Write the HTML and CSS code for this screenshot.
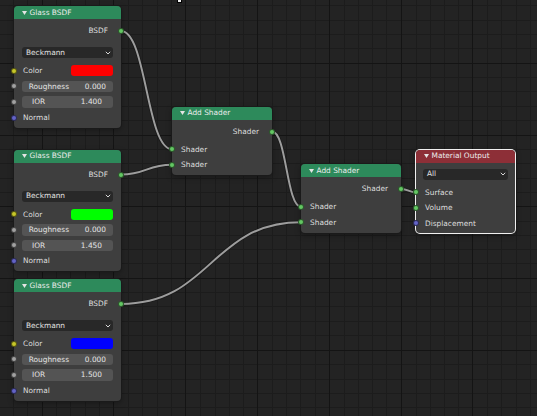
FILE: index.html
```html
<!DOCTYPE html>
<html>
<head>
<meta charset="utf-8">
<link rel="stylesheet" href="styles.css">
</head>
<body>
<div class="canvas">
  <svg class="backdrop" width="537" height="416" viewBox="0 0 537 416">
    <path class="grid-minor" d="M13.5 0V416M27.5 0V416M56.5 0V416M70.5 0V416M85.5 0V416M99.5 0V416M128.5 0V416M142.5 0V416M157.5 0V416M171.5 0V416M200.5 0V416M215.5 0V416M229.5 0V416M243.5 0V416M272.5 0V416M286.5 0V416M300.5 0V416M315.5 0V416M344.5 0V416M358.5 0V416M372.5 0V416M386.5 0V416M416.5 0V416M430.5 0V416M444.5 0V416M458.5 0V416M487.5 0V416M501.5 0V416M516.5 0V416M530.5 0V416M0 5.5H537M0 20.5H537M0 34.5H537M0 48.5H537M0 77.5H537M0 91.5H537M0 106.5H537M0 120.5H537M0 149.5H537M0 163.5H537M0 178.5H537M0 192.5H537M0 221.5H537M0 235.5H537M0 249.5H537M0 263.5H537M0 292.5H537M0 306.5H537M0 321.5H537M0 335.5H537M0 364.5H537M0 379.5H537M0 393.5H537M0 407.5H537"/>
    <path class="grid-major" d="M42.5 0V416M113.5 0V416M185.5 0V416M257.5 0V416M329.5 0V416M401.5 0V416M472.5 0V416M0 63.5H537M0 135.5H537M0 206.5H537M0 278.5H537M0 350.5H537"/>
    <g class="wire-shadow">
      <path d="M121 31C146.5 31 146.5 149.25 172 149.25"/>
      <path d="M121 174.5C146.5 174.5 146.5 164.75 172 164.75"/>
      <path d="M121 304C211 304 211 222.25 301 222.25"/>
      <path d="M272 131.5C286.5 131.5 286.5 206.75 301 206.75"/>
      <path d="M401 189C408.5 189 408.5 192.25 416 192.25"/>
    </g>
    <g class="wire">
      <path d="M121 31C146.5 31 146.5 149.25 172 149.25"/>
      <path d="M121 174.5C146.5 174.5 146.5 164.75 172 164.75"/>
      <path d="M121 304C211 304 211 222.25 301 222.25"/>
      <path d="M272 131.5C286.5 131.5 286.5 206.75 301 206.75"/>
      <path d="M401 189C408.5 189 408.5 192.25 416 192.25"/>
    </g>
  </svg>

  <div class="cursor-tip"></div>

  <!-- Glass BSDF 1 -->
  <div class="node node-glass n1">
    <div class="node-header"><svg class="tri" width="5" height="4" viewBox="0 0 5 4"><polygon points="0,0 5,0 2.5,4"/></svg><span>Glass BSDF</span></div>
    <div class="node-body">
      <div class="row row-out"><span>BSDF</span><i class="sock sock-shader"></i></div>
      <div class="dropdown"><span>Beckmann</span><svg class="chev" width="6" height="4" viewBox="0 0 6 4"><polyline points="0.8,0.8 3,3 5.2,0.8"/></svg></div>
      <div class="row"><i class="sock sock-color"></i><span class="lbl">Color</span><span class="swatch red"></span></div>
      <div class="row"><i class="sock sock-float"></i><div class="field"><span>Roughness</span><span>0.000</span></div></div>
      <div class="row"><i class="sock sock-float"></i><div class="field field-num"><span>IOR</span><span>1.400</span></div></div>
      <div class="row"><i class="sock sock-vector"></i><span class="lbl">Normal</span></div>
    </div>
  </div>

  <!-- Glass BSDF 2 -->
  <div class="node node-glass n2">
    <div class="node-header"><svg class="tri" width="5" height="4" viewBox="0 0 5 4"><polygon points="0,0 5,0 2.5,4"/></svg><span>Glass BSDF</span></div>
    <div class="node-body">
      <div class="row row-out"><span>BSDF</span><i class="sock sock-shader"></i></div>
      <div class="dropdown"><span>Beckmann</span><svg class="chev" width="6" height="4" viewBox="0 0 6 4"><polyline points="0.8,0.8 3,3 5.2,0.8"/></svg></div>
      <div class="row"><i class="sock sock-color"></i><span class="lbl">Color</span><span class="swatch green"></span></div>
      <div class="row"><i class="sock sock-float"></i><div class="field"><span>Roughness</span><span>0.000</span></div></div>
      <div class="row"><i class="sock sock-float"></i><div class="field field-num"><span>IOR</span><span>1.450</span></div></div>
      <div class="row"><i class="sock sock-vector"></i><span class="lbl">Normal</span></div>
    </div>
  </div>

  <!-- Glass BSDF 3 -->
  <div class="node node-glass n3">
    <div class="node-header"><svg class="tri" width="5" height="4" viewBox="0 0 5 4"><polygon points="0,0 5,0 2.5,4"/></svg><span>Glass BSDF</span></div>
    <div class="node-body">
      <div class="row row-out"><span>BSDF</span><i class="sock sock-shader"></i></div>
      <div class="dropdown"><span>Beckmann</span><svg class="chev" width="6" height="4" viewBox="0 0 6 4"><polyline points="0.8,0.8 3,3 5.2,0.8"/></svg></div>
      <div class="row"><i class="sock sock-color"></i><span class="lbl">Color</span><span class="swatch blue"></span></div>
      <div class="row"><i class="sock sock-float"></i><div class="field"><span>Roughness</span><span>0.000</span></div></div>
      <div class="row"><i class="sock sock-float"></i><div class="field field-num"><span>IOR</span><span>1.500</span></div></div>
      <div class="row"><i class="sock sock-vector"></i><span class="lbl">Normal</span></div>
    </div>
  </div>

  <!-- Add Shader 1 -->
  <div class="node node-add a1">
    <div class="node-header"><svg class="tri" width="5" height="4" viewBox="0 0 5 4"><polygon points="0,0 5,0 2.5,4"/></svg><span>Add Shader</span></div>
    <div class="node-body">
      <div class="row row-out"><span>Shader</span><i class="sock sock-shader"></i></div>
      <div class="row first-in"><i class="sock sock-shader"></i><span class="lbl">Shader</span></div>
      <div class="row"><i class="sock sock-shader"></i><span class="lbl">Shader</span></div>
    </div>
  </div>

  <!-- Add Shader 2 -->
  <div class="node node-add a2">
    <div class="node-header"><svg class="tri" width="5" height="4" viewBox="0 0 5 4"><polygon points="0,0 5,0 2.5,4"/></svg><span>Add Shader</span></div>
    <div class="node-body">
      <div class="row row-out"><span>Shader</span><i class="sock sock-shader"></i></div>
      <div class="row first-in"><i class="sock sock-shader"></i><span class="lbl">Shader</span></div>
      <div class="row"><i class="sock sock-shader"></i><span class="lbl">Shader</span></div>
    </div>
  </div>

  <!-- Material Output -->
  <div class="node node-output mo">
    <div class="node-header"><svg class="tri" width="5" height="4" viewBox="0 0 5 4"><polygon points="0,0 5,0 2.5,4"/></svg><span>Material Output</span></div>
    <div class="node-body">
      <div class="dropdown"><span>All</span><svg class="chev" width="6" height="4" viewBox="0 0 6 4"><polyline points="0.8,0.8 3,3 5.2,0.8"/></svg></div>
      <div class="row"><i class="sock sock-shader"></i><span class="lbl">Surface</span></div>
      <div class="row"><i class="sock sock-shader"></i><span class="lbl">Volume</span></div>
      <div class="row"><i class="sock sock-vector"></i><span class="lbl">Displacement</span></div>
    </div>
  </div>
</div>
</body>
</html>
```

FILE: styles.css
```css
html, body {
  margin: 0;
  padding: 0;
  background: #232323;
}

.canvas {
  position: relative;
  width: 537px;
  height: 416px;
  overflow: hidden;
  background: #232323;
  font-family: "DejaVu Sans", "Liberation Sans", sans-serif;
  font-size: 7.4px;
  line-height: 1;
  color: #dedede;
}

.backdrop {
  position: absolute;
  left: 0;
  top: 0;
  display: block;
}

.grid-minor {
  fill: none;
  stroke: #1c1c1c;
  stroke-width: 1;
  shape-rendering: crispEdges;
}

.grid-major {
  fill: none;
  stroke: #141414;
  stroke-width: 1;
  shape-rendering: crispEdges;
}

.wire-shadow path {
  fill: none;
  stroke: rgba(20, 20, 20, 0.55);
  stroke-width: 3.6;
}

.wire path {
  fill: none;
  stroke: #9d9d9d;
  stroke-width: 2;
}

.cursor-tip {
  position: absolute;
  left: 178px;
  top: 0;
  width: 3px;
  height: 2px;
  background: #f2f2f2;
  box-shadow: 0 0 0 1px #000;
}

/* ---------- nodes ---------- */
.node {
  --pad: 8px;
  position: absolute;
  background: #3e3e3e;
  border-radius: 4px;
  box-shadow: 0 0 0 1px #1a1a1a, 0 2px 6px rgba(0, 0, 0, 0.35);
}

.n1 { left: 14px; top: 6px; width: 107px; }
.n2 { left: 14px; top: 149.5px; width: 107px; }
.n3 { left: 14px; top: 279px; width: 107px; }
.a1 { left: 172px; top: 106.5px; width: 100px; }
.a2 { left: 301px; top: 164px; width: 100px; }
.mo { left: 416px; top: 149.5px; width: 99px; --pad: 7px; }

.node-output {
  box-shadow: 0 0 0 1px #f0f0f0, 0 2px 6px rgba(0, 0, 0, 0.35);
}

.node-header {
  height: 13px;
  display: flex;
  align-items: center;
  padding-left: 8px;
  background: #2d8a5b;
  border-radius: 4px 4px 0 0;
  color: #ececec;
}

.node-output .node-header {
  background: #8d2f37;
}

.tri {
  display: block;
  margin-right: 2.5px;
  fill: #e4e4e4;
}

.node-body {
  padding: 4px var(--pad) 2.6px;
}

.node-add .node-body {
  padding-bottom: 2.8px;
}

.node-output .node-body {
  padding-top: 6px;
  padding-bottom: 2px;
}

.row {
  position: relative;
  height: 15.6px;
  display: flex;
  align-items: center;
}

.row-out {
  height: 16px;
  justify-content: flex-end;
  padding-right: 5px;
}

.first-in {
  margin-top: 2px;
}

.lbl {
  padding-left: 1px;
}

.node-output .lbl {
  padding-left: 2px;
}

/* ---------- sockets ---------- */
.sock {
  position: absolute;
  top: 50%;
  left: calc(-1 * var(--pad) - 3px);
  width: 6px;
  height: 6px;
  margin-top: -3px;
  border-radius: 50%;
  box-sizing: border-box;
  border: 0.6px solid rgba(0, 0, 0, 0.55);
}

.row-out .sock {
  left: auto;
  right: calc(-1 * var(--pad) - 3px);
}

.sock-shader { background: #63c763; }
.sock-color { background: #c7c729; }
.sock-float { background: #a1a1a1; }
.sock-vector { background: #6363c7; }

/* ---------- widgets ---------- */
.dropdown {
  height: 11px;
  margin-top: 8px;
  margin-bottom: 5px;
  display: flex;
  align-items: center;
  justify-content: space-between;
  padding: 0 2.5px 0 4px;
  background: #282828;
  border-radius: 3px;
  color: #e2e2e2;
}

.node-output .dropdown {
  margin-top: 0;
}

.chev {
  display: block;
  fill: none;
  stroke: #d8d8d8;
  stroke-width: 1;
}

.field {
  flex: 1;
  height: 11.4px;
  display: flex;
  align-items: center;
  justify-content: space-between;
  padding: 0 7px 0 6.7px;
  background: #545454;
  border-radius: 3px;
  color: #e4e4e4;
}

.field-num {
  padding: 0 11px 0 10px;
}

.swatch {
  margin-left: auto;
  width: 42px;
  height: 11.4px;
  border-radius: 3px;
}

.red { background: #ff0000; }
.green { background: #00ff00; }
.blue { background: #0000ff; }
```
